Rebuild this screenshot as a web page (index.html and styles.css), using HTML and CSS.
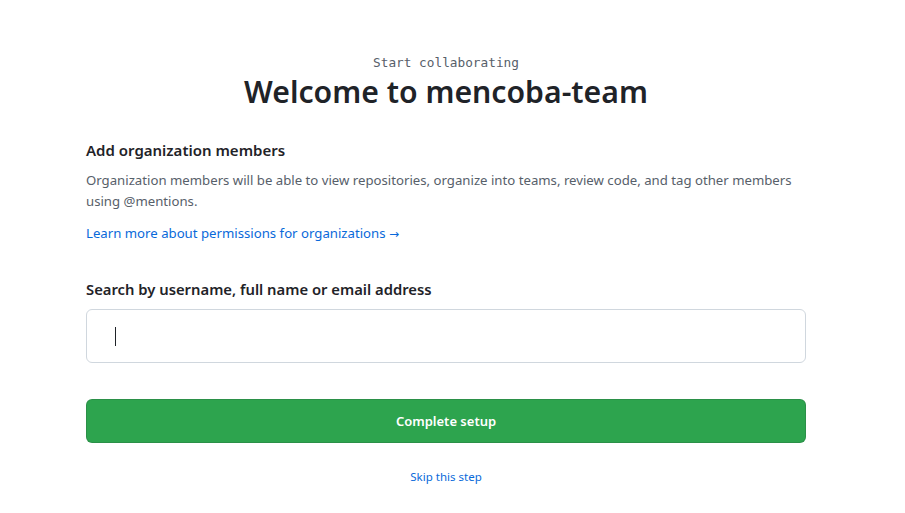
FILE: index.html
```html
<!DOCTYPE html>
<html lang="en">
<head>
<meta charset="utf-8">
<title>Welcome to mencoba-team</title>
<link rel="stylesheet" href="styles.css">
</head>
<body>
<div class="page">
  <main class="setup">
    <header class="hero">
      <p class="eyebrow">Start collaborating</p>
      <h1 class="title">Welcome to mencoba-team</h1>
    </header>
    <section class="intro">
      <h2 class="section-title">Add organization members</h2>
      <p class="desc">Organization members will be able to view repositories, organize into teams, review code, and tag other members using @mentions.</p>
      <a class="link" href="#">Learn more about permissions for organizations <span class="arrow">→</span></a>
    </section>
    <section class="search">
      <label class="search-label">Search by username, full name or email address</label>
      <div class="input"><span class="caret"></span></div>
    </section>
    <button class="btn-primary">Complete setup</button>
    <a class="skip" href="#">Skip this step</a>
  </main>
</div>
</body>
</html>
```
FILE: styles.css
```css
* { box-sizing: border-box; }
html, body { margin: 0; padding: 0; background: #fff; }
body {
  font-family: "Noto Sans", "Open Sans", "Liberation Sans", sans-serif;
  color: #1f2328;
}
.page {
  width: 892px;
  padding-top: 54px;
}
.setup {
  width: 720px;
  margin: 0 auto;
  display: flex;
  flex-direction: column;
}
.hero { text-align: center; }
.eyebrow {
  margin: 0;
  font-family: "DejaVu Sans Mono", "Liberation Mono", monospace;
  font-size: 12.75px;
  line-height: 18px;
  color: #57606a;
}
.title {
  margin: 0;
  font-size: 30.2px;
  line-height: 40px;
  font-weight: 600;
  color: #1f2328;
}
.intro { margin-top: 26px; }
.section-title {
  margin: 0;
  font-size: 15px;
  line-height: 24px;
  font-weight: 600;
}
.desc {
  margin: 8px 0 0;
  font-size: 13.2px;
  line-height: 21px;
  color: #57606a;
}
.link {
  display: inline-block;
  margin-top: 11px;
  font-size: 13.2px;
  line-height: 20px;
  color: #0969da;
  text-decoration: none;
}
.arrow {
  font-family: "DejaVu Sans", sans-serif;
  font-size: 12px;
}
.search { margin-top: 33px; }
.search-label {
  display: block;
  font-size: 14.8px;
  line-height: 24px;
  font-weight: 600;
}
.input {
  margin-top: 8px;
  height: 54px;
  border: 1px solid #d0d7de;
  border-radius: 6px;
  display: flex;
  align-items: center;
  padding-left: 28px;
}
.caret {
  width: 1px;
  height: 19px;
  background: #1f2328;
}
.btn-primary {
  margin-top: 36px;
  height: 44px;
  border: 1px solid rgba(31,35,40,0.15);
  border-radius: 6px;
  background: #2da44e;
  color: #fff;
  font-family: inherit;
  font-size: 13px;
  font-weight: 600;
}
.skip {
  align-self: center;
  margin-top: 25px;
  font-size: 11.5px;
  line-height: 18px;
  color: #0969da;
  text-decoration: none;
}
```
